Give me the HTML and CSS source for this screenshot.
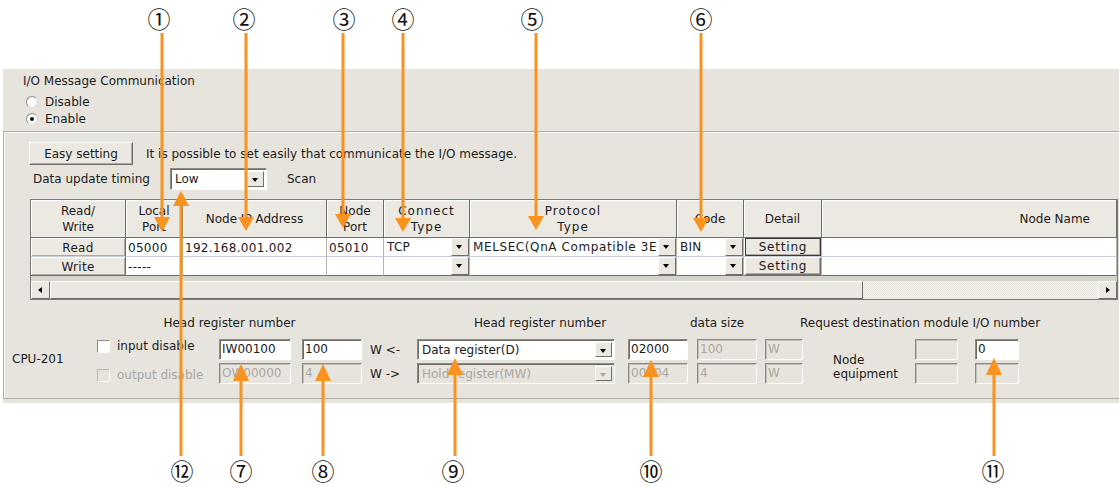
FILE: index.html
```html
<!DOCTYPE html>
<html lang="en">
<head>
    <meta charset="UTF-8">
    <meta name="viewport" content="width=device-width, initial-scale=1.0">
    <title>I/O Message Communication</title>
    <link rel="stylesheet" href="styles.css">
</head>
<body>
    <div class="panel">
        <!-- Enable / disable switch -->
        <div class="io-mode">
            <div class="io-title">I/O Message Communication</div>
            <div class="radio first"><span class="dot"></span>Disable</div>
            <div class="radio"><span class="dot on"></span>Enable</div>
        </div>

        <div class="group">
            <div class="easy-row">
                <button class="btn easy">Easy setting</button>
                <span>It is possible to set easily that communicate the I/O message.</span>
            </div>
            <div class="timing-row">
                <span class="timing-label">Data update timing</span>
                <div class="combo timing"><span>Low</span><i class="drop"></i></div>
                <span class="scan">Scan</span>
            </div>

            <!-- Connection table -->
            <div class="grid-frame">
                <table class="conn">
                    <colgroup>
                        <col style="width:95px">
                        <col style="width:57px">
                        <col style="width:144px">
                        <col style="width:57px">
                        <col style="width:86px">
                        <col style="width:207px">
                        <col style="width:67px">
                        <col style="width:78px">
                        <col>
                    </colgroup>
                    <thead>
                        <tr>
                            <th>Read/<br>Write</th>
                            <th>Local<br>Port</th>
                            <th>Node IP Address</th>
                            <th>Node<br>Port</th>
                            <th class="wide">Connect<br>Type</th>
                            <th class="wide">Protocol<br>Type</th>
                            <th>Code</th>
                            <th>Detail</th>
                            <th class="name">Node Name</th>
                        </tr>
                    </thead>
                    <tbody>
                        <tr>
                            <td class="rw">Read</td>
                            <td>05000</td>
                            <td>192.168.001.002</td>
                            <td>05010</td>
                            <td class="pick"><div class="cell-combo"><span>TCP</span><i class="drop"></i></div></td>
                            <td class="pick"><div class="cell-combo"><span class="proto">MELSEC(QnA Compatible 3E</span><i class="drop"></i></div></td>
                            <td class="pick"><div class="cell-combo"><span>BIN</span><i class="drop"></i></div></td>
                            <td class="pick"><button class="btn setting focus">Setting</button></td>
                            <td></td>
                        </tr>
                        <tr>
                            <td class="rw">Write</td>
                            <td>-----</td>
                            <td></td>
                            <td></td>
                            <td class="pick"><div class="cell-combo"><span></span><i class="drop"></i></div></td>
                            <td class="pick"><div class="cell-combo"><span></span><i class="drop"></i></div></td>
                            <td class="pick"><div class="cell-combo"><span></span><i class="drop"></i></div></td>
                            <td class="pick"><button class="btn setting">Setting</button></td>
                            <td></td>
                        </tr>
                    </tbody>
                </table>
                <div class="hscroll">
                    <span class="arrow left"></span>
                    <span class="thumb"></span>
                    <span class="track"></span>
                    <span class="arrow right"></span>
                </div>
            </div>

            <!-- Register mapping -->
            <div class="regs">
                <span class="r-head c-chk-in2">Head register number</span>
                <span class="r-head c-sel-head">Head register number</span>
                <span class="r-head c-size-head">data size</span>
                <span class="r-head c-req-head">Request destination module I/O number</span>

                <span class="cpu">CPU-201</span>

                <div class="check row-a"><i class="box"></i>input disable</div>
                <div class="check row-b off"><i class="box"></i>output disable</div>

                <span class="field row-a c-in1">IW00100</span>
                <span class="field row-b c-in1 off">OW00000</span>

                <span class="field row-a c-in2">100</span>
                <span class="field row-b c-in2 off">4</span>

                <span class="dir row-a">W &lt;-</span>
                <span class="dir row-b">W -&gt;</span>

                <div class="combo row-a c-sel"><span>Data register(D)</span><i class="drop"></i></div>
                <div class="combo row-b c-sel off"><span>Hold register(MW)</span><i class="drop"></i></div>

                <span class="field row-a c-in3">02000</span>
                <span class="field row-b c-in3 off">00004</span>

                <span class="field row-a c-in4 off">100</span>
                <span class="field row-b c-in4 off">4</span>

                <span class="field row-a c-in5 off">W</span>
                <span class="field row-b c-in5 off">W</span>

                <span class="node">Node<br>equipment</span>

                <span class="field row-a c-b1 off"></span>
                <span class="field row-b c-b1 off"></span>

                <span class="field row-a c-b2">0</span>
                <span class="field row-b c-b2 off"></span>
            </div>
        </div>
    </div>

    <!-- Numbered call-outs drawn over the screen -->
    <svg class="callouts" width="1119" height="487" viewBox="0 0 1119 487">
        <g class="lines">
            <line x1="162" y1="33" x2="162" y2="218"/>
            <line x1="246" y1="33" x2="246" y2="218"/>
            <line x1="343" y1="33" x2="343" y2="215"/>
            <line x1="403" y1="33" x2="403" y2="219"/>
            <line x1="536" y1="33" x2="536" y2="217"/>
            <line x1="701" y1="33" x2="701" y2="219"/>
            <line x1="181" y1="204" x2="181" y2="456"/>
            <line x1="241" y1="380" x2="241" y2="456"/>
            <line x1="323" y1="380" x2="323" y2="456"/>
            <line x1="455" y1="374" x2="455" y2="456"/>
            <line x1="651" y1="376" x2="651" y2="456"/>
            <line x1="994" y1="374" x2="994" y2="456"/>
        </g>
        <g class="heads">
            <polygon points="154,217 170,217 162,232"/>
            <polygon points="238,217 254,217 246,231"/>
            <polygon points="335,214 351,214 343,228"/>
            <polygon points="395,218 411,218 403,232"/>
            <polygon points="528,216 544,216 536,230"/>
            <polygon points="693,218 709,218 701,232"/>
            <polygon points="173,206 189,206 181,191"/>
            <polygon points="233,381 249,381 241,364"/>
            <polygon points="315,381 331,381 323,364"/>
            <polygon points="447,375 463,375 455,358"/>
            <polygon points="643,377 659,377 651,360"/>
            <polygon points="986,375 1002,375 994,358"/>
        </g>
        <g class="nums">
            <text x="159" y="18">①</text>
            <text x="244" y="18">②</text>
            <text x="344" y="18">③</text>
            <text x="403" y="18">④</text>
            <text x="532" y="18">⑤</text>
            <text x="701" y="18">⑥</text>
            <text x="182" y="470">⑫</text>
            <text x="241" y="470">⑦</text>
            <text x="323" y="470">⑧</text>
            <text x="453" y="470">⑨</text>
            <text x="651" y="470">⑩</text>
            <text x="993" y="470">⑪</text>
        </g>
    </svg>
</body>
</html>
```

FILE: styles.css
```css
/* Reset */
* {
    margin: 0;
    padding: 0;
    box-sizing: border-box;
}

body {
    position: relative;
    width: 1119px;
    height: 487px;
    overflow: hidden;
    background: #fff;
    font-family: "DejaVu Sans", sans-serif;
    font-size: 12px;
    color: #1c1c1c;
}

/* Dialog panel */
.panel {
    margin: 69px 0 0 3px;
    height: 334px;
    background: #e7e4dd;
}

.io-mode {
    height: 62px;
    padding: 4px 0 0 20px;
}

.io-title {
    line-height: 16px;
}

.radio {
    display: flex;
    align-items: center;
    gap: 7px;
    height: 17px;
    padding-left: 3px;
}

.radio.first {
    margin-top: 4px;
}

.dot {
    position: relative;
    width: 12px;
    height: 12px;
    border-radius: 50%;
    background: #fff;
    border: 1px solid;
    border-color: #8c8982 #dcd9d2 #dcd9d2 #8c8982;
}

.dot.on::after {
    content: "";
    position: absolute;
    left: 3px;
    top: 3px;
    width: 4px;
    height: 4px;
    border-radius: 50%;
    background: #111;
}

.group {
    height: 268px;
    border-top: 1px solid #aeaba4;
    border-left: 1px solid #aeaba4;
    border-bottom: 1px solid #aeaba4;
    box-shadow: inset 1px 1px 0 #fbfaf8;
    padding-top: 10px;
}

/* Buttons */
.btn {
    font: inherit;
    color: #1c1c1c;
    background: #ebe8e1;
    border: 1px solid;
    border-color: #fff #716f6a #716f6a #fff;
    box-shadow: inset -1px -1px 0 #aeaba4;
}

.easy-row {
    display: flex;
    align-items: center;
    gap: 13px;
    padding-left: 25px;
}

.easy {
    width: 104px;
    height: 23px;
}

.timing-row {
    display: flex;
    align-items: center;
    height: 22px;
    margin-top: 3px;
    padding-left: 29px;
}

.timing-label {
    width: 137px;
}

.scan {
    margin-left: 20px;
}

/* Combo boxes and fields */
.combo {
    display: flex;
    align-items: center;
    height: 22px;
    background: #fff;
    border: 1px solid;
    border-color: #8c8982 #fff #fff #8c8982;
    box-shadow: inset 1px 1px 0 #6e6c67;
    padding: 2px 2px 2px 4px;
}

.combo span {
    flex: 1;
    white-space: nowrap;
    overflow: hidden;
}

.timing {
    width: 97px;
}

.drop {
    position: relative;
    width: 17px;
    align-self: stretch;
    background: #ebe8e1;
    border: 1px solid;
    border-color: #fff #716f6a #716f6a #fff;
}

.drop::after {
    content: "";
    position: absolute;
    left: 4px;
    top: 6px;
    border-left: 3.5px solid transparent;
    border-right: 3.5px solid transparent;
    border-top: 4px solid #000;
}

.combo.off {
    background: transparent;
    color: #aaa79f;
}

.combo.off .drop::after {
    border-top-color: #aaa79f;
}

/* Connection table */
.grid-frame {
    width: 1088px;
    height: 101px;
    margin: 9px 0 0 26px;
    border: 1px solid #7b7974;
    background: #d6d3cc;
}

.conn {
    width: 1086px;
    table-layout: fixed;
    border-spacing: 0;
}

.conn th {
    height: 38px;
    padding: 0;
    font-weight: normal;
    line-height: 16px;
    background: #ece9e2;
    border-right: 1px solid #6f6d68;
    border-bottom: 1px solid #6f6d68;
    box-shadow: inset 1px 1px 0 #fff;
}

.conn th.wide {
    letter-spacing: 1px;
}

.conn th.name {
    text-align: right;
    padding-right: 26px;
}

.conn td {
    height: 19px;
    padding: 1px 0 0 2px;
    background: #fff;
    white-space: nowrap;
    overflow: hidden;
    letter-spacing: 0.3px;
    border-right: 1px solid #b6b4ae;
    border-bottom: 1px solid #c9cdd5;
}

.conn tr:last-child td {
    border-bottom-color: #6f6d68;
}

.conn td.rw {
    padding: 1px 0 0;
    text-align: center;
    background: #ece9e2;
    box-shadow: inset 1px 1px 0 #fff, inset -1px -1px 0 #aeaba4;
    border-right-color: #6f6d68;
}

.conn td.pick {
    padding: 0;
}

.cell-combo {
    display: flex;
    height: 18px;
    padding-left: 3px;
    line-height: 19px;
}

.cell-combo span {
    flex: 1;
    overflow: hidden;
}

.cell-combo .proto {
    letter-spacing: 0.6px;
}

.cell-combo .drop {
    width: 18px;
}

.setting {
    display: block;
    width: 76px;
    height: 18px;
    margin-left: 1px;
    letter-spacing: 0.8px;
}

.setting.focus {
    border-color: #3a3a3a;
}

.hscroll {
    display: flex;
    height: 18px;
    margin-top: 5px;
    background: #ebe8e1;
}

.arrow {
    position: relative;
    width: 19px;
    background: #ebe8e1;
    border: 1px solid;
    border-color: #fff #716f6a #716f6a #fff;
}

.arrow::after {
    content: "";
    position: absolute;
    top: 5px;
    border-top: 3.5px solid transparent;
    border-bottom: 3.5px solid transparent;
}

.arrow.left::after {
    left: 6px;
    border-right: 4px solid #000;
}

.arrow.right::after {
    left: 7px;
    border-left: 4px solid #000;
}

.thumb {
    width: 813px;
    background: #ebe8e1;
    border: 1px solid;
    border-color: #fff #716f6a #716f6a #fff;
}

.track {
    flex: 1;
    background: repeating-conic-gradient(#fbfaf7 0 25%, #e2dfd8 0 50%) 0 0 / 2px 2px;
}

/* Register mapping grid */
.regs {
    display: grid;
    grid-template-columns: 85px 122px 83px 60px 55px 211px 69px 68px 38px 112px 60px 44px;
    grid-template-rows: 24px 24px 22px;
    margin: 15px 0 0 8px;
    line-height: 14px;
}

.r-head {
    grid-row: 1;
    line-height: 16px;
    white-space: nowrap;
}

.c-chk-in2 {
    grid-column: 2 / 5;
    text-align: center;
}

.c-sel-head {
    grid-column: 6 / 8;
    padding-left: 57px;
}

.c-size-head {
    grid-column: 7 / 9;
    padding-left: 62px;
}

.c-req-head {
    grid-column: 9 / 13;
    padding-left: 35px;
}

.row-a {
    grid-row: 2;
}

.row-b {
    grid-row: 3;
}

.cpu {
    grid-column: 1;
    grid-row: 2 / 4;
    padding-top: 13px;
}

.check {
    grid-column: 2;
    display: flex;
    align-items: flex-start;
    gap: 7px;
}

.box {
    width: 13px;
    height: 13px;
    margin-top: 1px;
    background: #fff;
    border: 1px solid;
    border-color: #8c8982 #fff #fff #8c8982;
}

.check.off {
    color: #aaa79f;
    padding-top: 5px;
}

.check.off .box {
    background: #e7e4dd;
    border-color: #bcb9b2 #fff #fff #bcb9b2;
}

.field {
    height: 21px;
    padding-left: 2px;
    line-height: 19px;
    background: #fff;
    border: 1px solid;
    border-color: #8c8982 #fff #fff #8c8982;
    box-shadow: inset 1px 1px 0 #6e6c67;
}

.field.off {
    background: transparent;
    color: #aaa79f;
    box-shadow: inset 1px 1px 0 #c3c0b9;
}

.c-in1 { grid-column: 3; width: 72px; }
.c-in2 { grid-column: 4; width: 60px; }
.c-sel { grid-column: 6; width: 198px; height: 21px; }
.c-in3 { grid-column: 7; width: 60px; }
.c-in4 { grid-column: 8; width: 60px; }
.c-in5 { grid-column: 9; width: 38px; }
.c-b1 { grid-column: 11; width: 43px; }
.c-b2 { grid-column: 12; width: 44px; }

.dir {
    grid-column: 5;
    padding: 4px 0 0 8px;
}

.node {
    grid-column: 10;
    grid-row: 2 / 4;
    padding: 14px 0 0 30px;
}

/* Call-out overlay */
.callouts {
    position: absolute;
    top: 0;
    left: 0;
    pointer-events: none;
}

.callouts .lines line {
    stroke: #f7931e;
    stroke-width: 3;
}

.callouts .heads polygon {
    fill: #f7931e;
}

.callouts .nums text {
    font-family: "Noto Sans CJK JP", "DejaVu Sans", sans-serif;
    font-size: 23px;
    text-anchor: middle;
    dominant-baseline: central;
    fill: #111;
}
```
